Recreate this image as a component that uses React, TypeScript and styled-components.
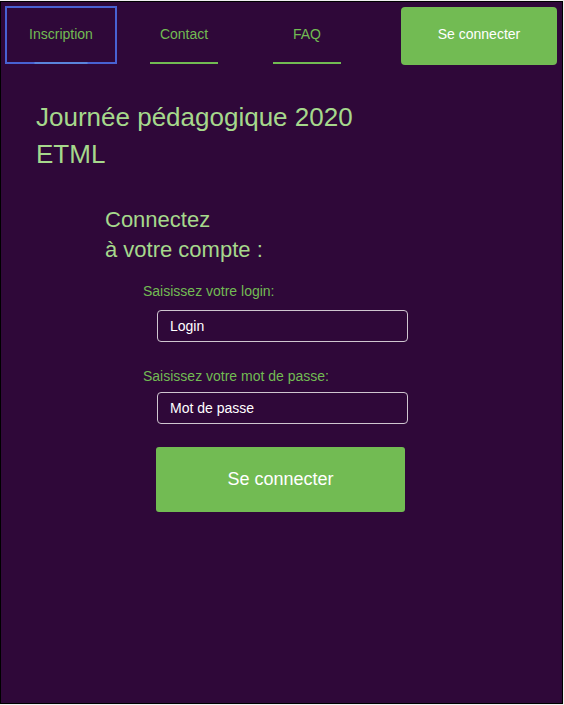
import React from "react";
import styled, { createGlobalStyle } from "styled-components";

const GlobalStyle = createGlobalStyle`
  html, body {
    margin: 0;
    padding: 0;
    background: #f0f0f0;
  }
  body {
    font-family: "Liberation Sans", Arial, sans-serif;
  }
  * { box-sizing: border-box; }
`;

const Page = styled.div`
  margin-top: 1px;
  width: 563px;
  height: 703px;
  border: 1px solid #000;
  background: #2f0839;
  display: flex;
  flex-direction: column;
`;

const Header = styled.header`
  display: flex;
  align-items: flex-start;
  padding: 4px 5px 0 4px;
  height: 64px;
`;

const Nav = styled.nav`
  display: grid;
  grid-template-columns: repeat(3, 112px);
  column-gap: 11px;
`;

const NavItem = styled.a<{ $active?: boolean }>`
  position: relative;
  height: 58px;
  border: 2px solid ${(p) => (p.$active ? "#4862d2" : "transparent")};
  display: flex;
  align-items: center;
  justify-content: center;
  padding-bottom: 2px;
  color: #72bb53;
  font-size: 14px;
  text-decoration: none;
  cursor: pointer;

  &::after {
    content: "";
    position: absolute;
    left: 50%;
    bottom: -2px;
    transform: translateX(-50%);
    width: ${(p) => (p.$active ? "53px" : "68px")};
    height: 2px;
    background: ${(p) => (p.$active ? "#5a84dc" : "#72bb53")};
  }
`;

const HeaderButton = styled.button`
  margin-left: auto;
  margin-top: 1px;
  width: 156px;
  height: 58px;
  padding: 0 0 4px;
  border: none;
  border-radius: 4px;
  background: #72bb53;
  color: #ffffff;
  font-family: "Liberation Sans", Arial, sans-serif;
  font-size: 14px;
  cursor: pointer;
`;

const Main = styled.main`
  display: flex;
  flex-direction: column;
  padding: 33px 0 0 35px;
`;

const Title = styled.h1`
  margin: 0;
  font-size: 26px;
  line-height: 37px;
  font-weight: normal;
  color: #a6d88c;
`;

const Form = styled.form`
  display: flex;
  flex-direction: column;
  align-items: flex-start;
  margin-top: 32px;
`;

const Subtitle = styled.h2`
  margin: 0 0 0 69px;
  font-size: 22px;
  line-height: 30px;
  font-weight: normal;
  color: #a6d88c;
`;

const Label = styled.label<{ $top: number }>`
  margin: ${(p) => p.$top}px 0 0 107px;
  font-size: 14px;
  line-height: 16px;
  color: #72bb53;
`;

const Input = styled.input<{ $top: number }>`
  margin: ${(p) => p.$top}px 0 0 121px;
  width: 251px;
  height: 32px;
  border: 1px solid #cfc6d0;
  border-radius: 4px;
  background: transparent;
  padding: 0 12px;
  font-family: "Liberation Sans", Arial, sans-serif;
  font-size: 14px;
  color: #ffffff;
  outline: none;

  &::placeholder {
    color: #ffffff;
    opacity: 1;
  }
`;

const SubmitButton = styled.button`
  margin: 23px 0 0 120px;
  width: 249px;
  height: 65px;
  padding: 0;
  border: none;
  border-radius: 3px;
  background: #72bb53;
  color: #ffffff;
  font-family: "Liberation Sans", Arial, sans-serif;
  font-size: 18px;
  cursor: pointer;
`;

export default function App() {
  return (
    <>
      <GlobalStyle />
      <Page>
        <Header>
          <Nav>
            <NavItem $active>Inscription</NavItem>
            <NavItem>Contact</NavItem>
            <NavItem>FAQ</NavItem>
          </Nav>
          <HeaderButton type="button">Se connecter</HeaderButton>
        </Header>
        <Main>
          <Title>
            Journée pédagogique 2020
            <br />
            ETML
          </Title>
          <Form onSubmit={(e) => e.preventDefault()}>
            <Subtitle>
              Connectez
              <br />à votre compte :
            </Subtitle>
            <Label $top={18} htmlFor="login">
              Saisissez votre login:
            </Label>
            <Input $top={11} id="login" type="text" placeholder="Login" />
            <Label $top={26} htmlFor="password">
              Saisissez votre mot de passe:
            </Label>
            <Input $top={8} id="password" type="password" placeholder="Mot de passe" />
            <SubmitButton type="submit">Se connecter</SubmitButton>
          </Form>
        </Main>
      </Page>
    </>
  );
}
